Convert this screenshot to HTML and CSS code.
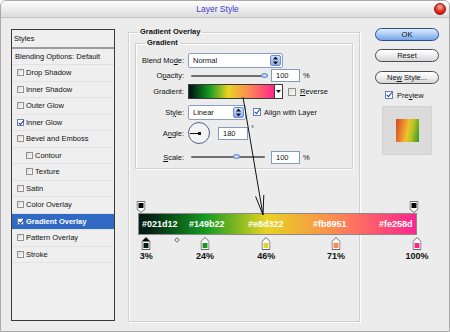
FILE: index.html
```html
<!DOCTYPE html>
<html lang="en">
<head>
  <meta charset="UTF-8" />
  <title>Layer Style</title>
  <link rel="stylesheet" href="styles.css">
</head>
<body>
  <div class="window">
    <div class="titlebar">
      <span class="title">Layer Style</span>
      <span class="close"></span>
    </div>

    <div class="main">
      <div class="styles">
        <div class="styles-head">Styles</div>
        <div class="styles-blend">Blending Options: Default</div>
        <ul class="styles-list">
          <li><span class="box"></span>Drop Shadow</li>
          <li><span class="box"></span>Inner Shadow</li>
          <li><span class="box"></span>Outer Glow</li>
          <li><span class="box checked"></span>Inner Glow</li>
          <li><span class="box"></span>Bevel and Emboss</li>
          <li class="sub"><span class="box"></span>Contour</li>
          <li class="sub"><span class="box"></span>Texture</li>
          <li><span class="box"></span>Satin</li>
          <li><span class="box"></span>Color Overlay</li>
          <li class="active"><span class="box checked"></span>Gradient Overlay</li>
          <li><span class="box"></span>Pattern Overlay</li>
          <li><span class="box"></span>Stroke</li>
        </ul>
      </div>

      <fieldset class="group outer">
        <legend>Gradient Overlay</legend>
        <fieldset class="group inner">
          <legend>Gradient</legend>

          <div class="row row-blend">
            <span class="label">Blend Mo<u>d</u>e:</span>
            <div class="select select-blend">
              <span>Normal</span>
              <i class="spin"><svg width="9" height="11" viewBox="0 0 9 11"><path d="M4.5 1.5l2.5 3h-5zM4.5 9.5l2.5-3h-5z" fill="#111"/></svg></i>
            </div>
          </div>

          <div class="row row-opacity">
            <span class="label">O<u>p</u>acity:</span>
            <div class="slider"><span class="knob" style="left: 99%"></span></div>
            <span class="num">100</span>
            <span class="unit">%</span>
          </div>

          <div class="row row-gradient">
            <span class="label">Gradient:</span>
            <div class="grad"></div>
            <div class="grad-arrow"><svg width="5" height="3" viewBox="0 0 5 3"><path d="M0 0h5l-2.5 3z" fill="#111"/></svg></div>
            <span class="box lg reverse"></span>
            <span class="check-text"><u>R</u>everse</span>
          </div>

          <div class="row row-style">
            <span class="label">St<u>y</u>le:</span>
            <div class="select select-style">
              <span>Linear</span>
              <i class="spin"><svg width="9" height="11" viewBox="0 0 9 11"><path d="M4.5 1.5l2.5 3h-5zM4.5 9.5l2.5-3h-5z" fill="#111"/></svg></i>
            </div>
            <span class="box lg checked align"></span>
            <span class="check-text align-text">Align with Layer</span>
          </div>

          <div class="row row-angle">
            <span class="label">A<u>n</u>gle:</span>
            <div class="dial"></div>
            <span class="num num-angle">180</span>
            <span class="deg">°</span>
          </div>

          <div class="row row-scale">
            <span class="label"><u>S</u>cale:</span>
            <div class="slider"><span class="knob" style="left: 62%"></span></div>
            <span class="num">100</span>
            <span class="unit">%</span>
          </div>
        </fieldset>
      </fieldset>

      <div class="actions">
        <button class="btn default">OK</button>
        <button class="btn btn-reset">Reset</button>
        <button class="btn btn-new">Ne<u>w</u> Style...</button>
        <div class="preview-check"><span class="box lg checked"></span><span>Pre<u>v</u>iew</span></div>
        <div class="preview"><div class="swatch"></div></div>
      </div>
    </div>

    <!-- gradient editor callout, drawn over the dialog -->
    <div class="editor">
      <div class="stops-top">
        <span class="stop" style="left: 1%"><svg width="9" height="12" viewBox="0 0 9 12"><path d="M.5 .5h8v7.5l-4 3.5l-4-3.5z" fill="#fff" stroke="#666"/><rect x="2" y="2" width="5" height="5" fill="#000"/></svg></span>
        <span class="stop" style="left: 99%"><svg width="9" height="12" viewBox="0 0 9 12"><path d="M.5 .5h8v7.5l-4 3.5l-4-3.5z" fill="#fff" stroke="#666"/><rect x="2" y="2" width="5" height="5" fill="#000"/></svg></span>
      </div>
      <div class="bar">
        <span class="hex" style="left: 3px">#021d12</span>
        <span class="hex" style="left: 50px">#149b22</span>
        <span class="hex" style="left: 109px">#e8d322</span>
        <span class="hex" style="left: 174px">#fb8951</span>
        <span class="hex" style="left: 240px">#fe258d</span>
      </div>
      <div class="stops-bottom">
        <span class="stop" style="left: 3%"><svg width="9" height="13" viewBox="0 0 9 13"><path d="M4.5 .5l4 4v8h-8v-8z" fill="#fff" stroke="#555"/><path d="M4.5 .5l4 4h-8z" fill="#000"/><rect x="2" y="6" width="5" height="5" fill="#021d12"/></svg></span>
        <span class="mid" style="left: 14%"></span>
        <span class="stop" style="left: 24%"><svg width="9" height="13" viewBox="0 0 9 13"><path d="M4.5 .5l4 4v8h-8v-8z" fill="#fff" stroke="#666"/><rect x="2" y="6" width="5" height="5" fill="#149b22"/></svg></span>
        <span class="stop" style="left: 46%"><svg width="9" height="13" viewBox="0 0 9 13"><path d="M4.5 .5l4 4v8h-8v-8z" fill="#fff" stroke="#666"/><rect x="2" y="6" width="5" height="5" fill="#e8d322"/></svg></span>
        <span class="stop" style="left: 71%"><svg width="9" height="13" viewBox="0 0 9 13"><path d="M4.5 .5l4 4v8h-8v-8z" fill="#fff" stroke="#666"/><rect x="2" y="6" width="5" height="5" fill="#fb8951"/></svg></span>
        <span class="stop" style="left: 100%"><svg width="9" height="13" viewBox="0 0 9 13"><path d="M4.5 .5l4 4v8h-8v-8z" fill="#fff" stroke="#666"/><rect x="2" y="6" width="5" height="5" fill="#fe258d"/></svg></span>
      </div>
      <div class="pcts">
        <span class="pct" style="left: 3%">3%</span>
        <span class="pct" style="left: 24%">24%</span>
        <span class="pct" style="left: 46%">46%</span>
        <span class="pct" style="left: 71%">71%</span>
        <span class="pct" style="left: 100%">100%</span>
      </div>
    </div>

    <svg class="pointer" width="448" height="331" viewBox="0 0 448 331">
      <path d="M242 96L262 214M254.6 195.4L262 214L262.8 194" fill="none" stroke="#111" stroke-width="1"/>
    </svg>
  </div>
</body>
</html>
```

FILE: styles.css
```css
* {
  box-sizing: border-box;
}

body {
  margin: 0;
  font-family: "Liberation Sans", Arial, sans-serif;
  font-size: 7.5px;
  color: #111;
  background: #fff;
}

.window {
  position: relative;
  width: 450px;
  height: 332px;
  background: #ececec;
  border: 1px solid #a9a9a9;
  border-radius: 6px 6px 0 0;
  overflow: hidden;
}

/* title bar */
.titlebar {
  height: 17px;
  display: flex;
  align-items: center;
  padding-right: 3px;
  background: linear-gradient(#fefefe, #eaeaea 60%, #dcdcdc);
  border-bottom: 1px solid #c2c2c2;
}

.title {
  flex: 1;
  text-align: center;
  color: #3a3ad2;
  font-size: 8.5px;
}

.close {
  width: 12px;
  height: 12px;
  border-radius: 50%;
  border: 1px solid #8c1a12;
  background: radial-gradient(circle at 50% 30%, #ffb0a0, #e2281c 55%, #a30e08);
}

.main {
  display: flex;
  align-items: flex-start;
  padding-left: 10px;
}

/* styles list */
.styles {
  width: 104px;
  height: 292px;
  margin-top: 11px;
  border: 1px solid #3a3a3a;
  background: #efefef;
}

.styles-head {
  height: 19px;
  line-height: 17px;
  padding-left: 2px;
  border-bottom: 2px solid #9c9c9c;
}

.styles-blend {
  height: 16px;
  line-height: 15px;
  padding-left: 3px;
  border-bottom: 1px solid #e0e0e0;
}

.styles-list {
  list-style: none;
  margin: 0;
  padding: 0;
}

.styles-list li {
  height: 16.5px;
  display: flex;
  align-items: center;
  gap: 2px;
  padding-left: 5px;
  border-bottom: 1px solid #e3e3e3;
}

.styles-list li.sub {
  padding-left: 14px;
}

.styles-list li.active {
  background: #316ac5;
  color: #fff;
  font-weight: bold;
}

.box {
  position: relative;
  flex: none;
  width: 7px;
  height: 7px;
  border: 1px solid #919191;
  background: linear-gradient(135deg, #dadada, #fff);
}

.box.lg {
  width: 8px;
  height: 8px;
}

.box.checked {
  background: #fff;
  border-color: #6a7fae;
}

.box.checked::after {
  content: "";
  position: absolute;
  left: 1.5px;
  top: -1px;
  width: 2px;
  height: 4.5px;
  border: solid #1c3c9c;
  border-width: 0 1.6px 1.6px 0;
  transform: rotate(40deg);
}

/* group boxes */
.group {
  margin: 0;
  padding: 0 6px;
  border: 1px solid #d0d0d0;
  box-shadow: 1px 1px 0 #fff, inset 1px 1px 0 #fff;
}

.group legend {
  font-weight: bold;
  line-height: 10px;
  padding: 0 2px;
  margin-left: 3px;
}

.outer {
  width: 232px;
  height: 295px;
  margin: 9px 0 0 13px;
}

.inner {
  width: 100%;
  height: 131px;
  margin-top: 1px;
}

.row {
  display: flex;
  align-items: center;
  white-space: nowrap;
}

.row .label {
  flex: none;
  width: 42px;
  margin-right: 4px;
  text-align: right;
}

.row-blend { height: 15px; margin-top: 5px; }
.row-opacity { height: 15px; }
.row-gradient { height: 15px; margin-top: 1px; }
.row-style { height: 14px; margin-top: 6px; }
.row-angle { height: 22px; margin-top: 3px; }
.row-scale { height: 14px; margin-top: 6px; }

.select {
  display: flex;
  align-items: center;
  height: 15px;
  padding: 0 1px 0 4px;
  background: #fff;
  border: 1px solid #8d9fc0;
  border-radius: 2px;
}

.select span {
  flex: 1;
}

.select-blend { width: 95px; }
.select-style { width: 58px; }

.spin {
  display: flex;
  width: 11px;
  height: 11px;
  align-items: center;
  justify-content: center;
  border: 1px solid #6c8ed8;
  border-radius: 2px;
  background: linear-gradient(#d0e0fe, #86a9ec);
}

.slider {
  position: relative;
  width: 74px;
  height: 2px;
  margin-left: 3px;
  border-radius: 1px;
  background: #6e6e6e;
}

.knob {
  position: absolute;
  top: -2px;
  width: 7px;
  height: 5px;
  margin-left: -3.5px;
  border-radius: 50%;
  border: 1px solid #6f8fc8;
  background: radial-gradient(#dfe9ff, #8eadea);
}

.num {
  width: 29px;
  height: 13px;
  margin-left: 6px;
  padding-left: 4px;
  line-height: 11px;
  background: #fff;
  border: 1px solid #7f9db9;
}

.unit {
  margin-left: 3px;
}

.grad {
  width: 87px;
  height: 15px;
  border: 1px solid #3a3a3a;
  background: linear-gradient(to right, #021d12 3%, #149b22 24%, #e8d322 46%, #fb8951 71%, #fe258d 100%);
}

.grad-arrow {
  display: flex;
  align-items: center;
  justify-content: center;
  width: 8px;
  height: 15px;
  border: 1px solid #3a3a3a;
  border-left: none;
  background: #fff;
}

.reverse { margin-left: 5px; }
.align { margin-left: 7px; }

.check-text { margin-left: 4px; }
.align-text { margin-left: 3px; }

.dial {
  position: relative;
  width: 22px;
  height: 22px;
  border-radius: 50%;
  border: 1px solid #52628f;
  background: #f3f3f3;
}

.dial::before {
  content: "";
  position: absolute;
  left: 1px;
  top: 10px;
  width: 9px;
  height: 1px;
  background: #111;
}

.dial::after {
  content: "";
  position: absolute;
  left: 9px;
  top: 9px;
  width: 3px;
  height: 3px;
  background: #111;
}

.num-angle {
  width: 30px;
  margin-left: 8px;
}

.deg {
  align-self: flex-start;
  margin: 2px 0 0 3px;
}

/* buttons column */
.actions {
  display: flex;
  flex-direction: column;
  width: 64px;
  margin: 10px 0 0 15px;
  white-space: nowrap;
}

.btn {
  height: 13px;
  padding: 0;
  font: inherit;
  font-size: 7.5px;
  color: #111;
  border: 1px solid #4d4d4d;
  border-radius: 7px;
  background: linear-gradient(#ffffff, #eeeeee 50%, #d6d6d6);
}

.btn.default {
  border-color: #2d4f8f;
  background: linear-gradient(#dcecff, #a9caf5 50%, #74a5ea);
}

.btn-reset { margin-top: 8px; }
.btn-new { margin-top: 9px; }

.preview-check {
  display: flex;
  align-items: center;
  gap: 4px;
  margin: 7px 0 0 10px;
  height: 8px;
}

.preview {
  display: flex;
  align-items: center;
  justify-content: center;
  width: 50px;
  height: 49px;
  margin: 7px 0 0 7px;
  background: #dbdbdb;
  border: 1px solid #d2d2d2;
}

.swatch {
  width: 23px;
  height: 23px;
  background: linear-gradient(100deg, #d4462e, #eb8a2c 30%, #efc22a 50%, #b6c424 68%, #2f9a22);
}

/* gradient editor callout */
.editor {
  position: absolute;
  left: 137px;
  top: 199px;
  width: 279px;
}

.stops-top,
.stops-bottom,
.pcts {
  position: relative;
}

.stops-top { height: 13px; }
.stops-bottom { height: 15px; }
.pcts { height: 12px; }

.stop {
  position: absolute;
  top: 1px;
  line-height: 0;
  transform: translateX(-50%);
}

.stops-bottom .stop {
  top: 2px;
}

.bar {
  position: relative;
  height: 22px;
  border: 1px solid #8a8a8a;
  background: linear-gradient(to right, #021d12 3%, #149b22 24%, #e8d322 46%, #fb8951 71%, #fe258d 100%);
}

.hex {
  position: absolute;
  top: 0;
  line-height: 20px;
  font-size: 9px;
  font-weight: bold;
  color: #fff;
}

.mid {
  position: absolute;
  top: 3px;
  width: 4px;
  height: 4px;
  border: 1px solid #777;
  background: #fff;
  transform: translateX(-50%) rotate(45deg);
}

.pct {
  position: absolute;
  line-height: 12px;
  font-size: 9px;
  font-weight: bold;
  transform: translateX(-50%);
}

.pointer {
  position: absolute;
  left: 0;
  top: 0;
  pointer-events: none;
}
```
